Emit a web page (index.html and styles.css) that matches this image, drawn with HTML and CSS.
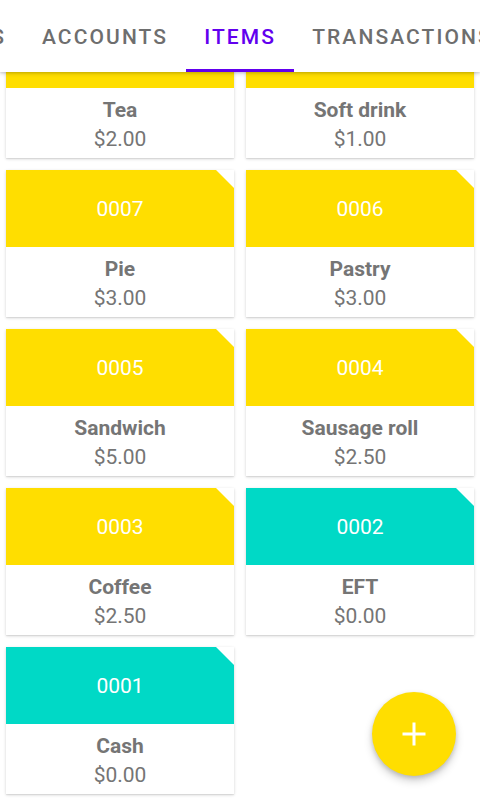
FILE: index.html
```html
<!DOCTYPE html>
<html>
<head>
<meta charset="utf-8">
<link rel="stylesheet" href="styles.css">
</head>
<body>
<div class="app">
  <header class="tabbar">
    <div class="tab tab-cut"><span>REPORTS</span></div>
    <div class="tab">ACCOUNTS</div>
    <div class="tab active">ITEMS</div>
    <div class="tab">TRANSACTIONS</div>
  </header>
  <main class="content">
    <div class="grid">
      <div class="card"><div class="head yellow">0009</div><div class="body"><div class="name">Tea</div><div class="price">$2.00</div></div></div>
      <div class="card"><div class="head yellow">0008</div><div class="body"><div class="name">Soft drink</div><div class="price">$1.00</div></div></div>
      <div class="card"><div class="head yellow">0007</div><div class="body"><div class="name">Pie</div><div class="price">$3.00</div></div></div>
      <div class="card"><div class="head yellow">0006</div><div class="body"><div class="name">Pastry</div><div class="price">$3.00</div></div></div>
      <div class="card"><div class="head yellow">0005</div><div class="body"><div class="name">Sandwich</div><div class="price">$5.00</div></div></div>
      <div class="card"><div class="head yellow">0004</div><div class="body"><div class="name">Sausage roll</div><div class="price">$2.50</div></div></div>
      <div class="card"><div class="head yellow">0003</div><div class="body"><div class="name">Coffee</div><div class="price">$2.50</div></div></div>
      <div class="card"><div class="head teal">0002</div><div class="body"><div class="name">EFT</div><div class="price">$0.00</div></div></div>
      <div class="card"><div class="head teal">0001</div><div class="body"><div class="name">Cash</div><div class="price">$0.00</div></div></div>
    </div>
  </main>
  <button class="fab" aria-label="Add">
    <svg width="26" height="26" viewBox="0 0 26 26"><path d="M13 1.5v23M1.5 13h23" stroke="#fff" stroke-width="3" fill="none"/></svg>
  </button>
</div>
</body>
</html>
```
FILE: styles.css
```css
* { box-sizing: border-box; }
html, body { margin: 0; padding: 0; background: #fff; }
body { font-family: Roboto, "Noto Sans", sans-serif; }
.app { position: relative; width: 480px; height: 800px; overflow: hidden; background: #fff; }
.tabbar {
  position: relative; z-index: 2;
  height: 72px; display: flex; align-items: stretch;
  background: #fff; overflow: hidden; white-space: nowrap;
  box-shadow: 0 2px 4px rgba(0,0,0,0.14), 0 1px 2px rgba(0,0,0,0.1);
}
.tab {
  flex: none; min-width: 108px; padding: 4px 18px 3px;
  display: flex; align-items: center; justify-content: center;
  font-size: 21px; font-weight: 500; letter-spacing: 2.1px;
  color: #6e6e6e;
}
.tab-cut { min-width: 0; width: 24px; padding: 4px 18px 3px 0; justify-content: flex-end; overflow: hidden; }
.tab-cut span { flex: none; }
.tab.active { color: #6200ee; border-bottom: 3px solid #6200ee; padding-bottom: 0; }
.content { height: 728px; overflow: hidden; }
.grid {
  margin-top: -61px; padding: 0 6px;
  display: grid; grid-template-columns: 228px 228px; column-gap: 12px; row-gap: 12px;
}
.card { background: #fff; box-shadow: 0 1px 3px rgba(0,0,0,0.16), 0 1px 1px rgba(0,0,0,0.06); height: 147px; display: flex; flex-direction: column; }
.head {
  height: 77px; display: flex; align-items: center; justify-content: center;
  color: #fff; font-size: 21px;
  clip-path: polygon(0 0, calc(100% - 18px) 0, 100% 18px, 100% 100%, 0 100%);
}
.yellow { background: #ffde00; }
.teal { background: #00d9c6; }
.body { padding-top: 8px; text-align: center; color: #757575; font-size: 21px; line-height: 29px; }
.name { font-weight: 700; }
.price { font-weight: 400; }
.fab {
  position: absolute; right: 24px; bottom: 24px;
  width: 84px; height: 84px; border-radius: 50%; border: 0; padding: 0;
  background: #ffde00; display: flex; align-items: center; justify-content: center;
  box-shadow: 0 5px 8px rgba(0,0,0,0.18), 0 2px 4px rgba(0,0,0,0.14);
}
```
